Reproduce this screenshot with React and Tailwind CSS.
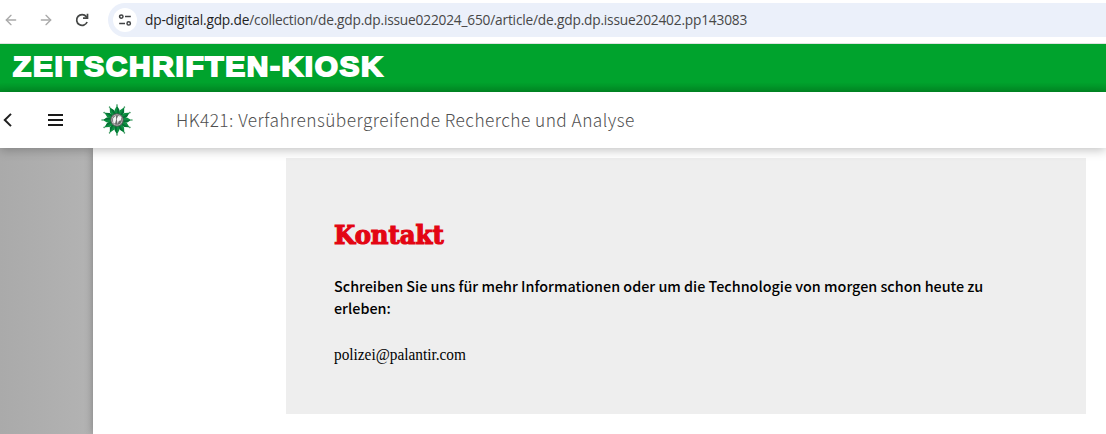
import { ArrowLeft, ArrowRight } from "lucide-react";

const rays = Array.from({ length: 12 }, (_, i) => i * 30);

function Star() {
  return (
    <svg className="size-8 shrink-0" viewBox="0 0 32 32">
      <circle cx="16" cy="16" r="9" fill="#077a35" />
      {rays.map((angle) => (
        <g key={angle} transform={`rotate(${angle} 16 16)`}>
          <path d="M16 .4 L16.6 2.6 L18.4 6 L17.8 11 H14.2 L13.6 6 L15.4 2.6Z" fill="#0c9040" />
          <path d="M16 2.4 L18.4 6 L17.8 11 H16.4Z" fill="#067036" />
          <circle cx="16" cy="1.1" r=".8" fill="#4a9a68" />
        </g>
      ))}
      <circle cx="16" cy="16" r="6.2" fill="#bdbdbd" stroke="#4a4a4a" strokeWidth=".9" />
      <circle cx="16" cy="16" r="4.8" fill="#6a6a6a" />
      <path d="M14.8 11.6 L12 14.4 L12.2 18.4 L14 19.8 L15.2 15.5Z M17 12 L20 12.6 L20 16.2 L17.8 17 L16.6 20 L15.8 15Z" fill="#f4f4f4" />
    </svg>
  );
}

function BrowserBar() {
  return (
    <div className="flex h-[44px] shrink-0 items-start border-b border-[#dfe3e1] bg-white">
      <div className="flex h-10 w-[108px] shrink-0 items-center pl-[3px]">
        <ArrowLeft className="size-4 text-[#a9a9a9]" strokeWidth={2} />
        <ArrowRight className="ml-[19px] size-4 text-[#a9a9a9]" strokeWidth={2} />
        <svg className="ml-[20px] size-4" viewBox="0 0 16 16" fill="none" stroke="#454746" strokeWidth="1.7">
          <path d="M13.1 10A5.4 5.4 0 1 1 12.3 4.6L13.4 5.8" />
          <path d="M13.5 1.8V6.2H9" />
        </svg>
      </div>
      <div className="mt-[3px] flex h-[34px] flex-1 items-center rounded-l-full bg-[#ebf0fa] pl-[5px]">
        <div className="flex size-6 shrink-0 items-center justify-center rounded-full bg-white">
          <svg className="size-[14px]" viewBox="0 0 14 14" fill="none" stroke="#404244" strokeWidth="1.5">
            <circle cx="3.3" cy="3.6" r="1.7" />
            <path d="M7 3.6H12.8M1.2 10.4H7" />
            <circle cx="10.7" cy="10.4" r="1.7" />
          </svg>
        </div>
        <div className="ml-[8px] origin-left scale-x-[0.98] whitespace-nowrap font-['Open_Sans',sans-serif] text-[14px] leading-5 tracking-[-0.2px] text-[#474747]">
          <span className="text-[#1f1f1f]">dp-digital.gdp.de</span>/collection/de.gdp.dp.issue022024_650/article/de.gdp.dp.issue202402.pp143083
        </div>
      </div>
    </div>
  );
}

export default function App() {
  return (
    <div className="flex h-[434px] w-[1106px] flex-col overflow-hidden bg-white">
      <BrowserBar />
      <div className="flex h-12 shrink-0 items-start bg-[linear-gradient(#00a32d_80%,#008d25)] pl-[13px]">
        <h1 className="mt-[4px] origin-left scale-x-[1.046] whitespace-nowrap font-['Liberation_Sans',sans-serif] text-[28.5px] font-bold leading-9 tracking-[1.6px] text-white [-webkit-text-stroke:1.9px_#fff]">
          ZEITSCHRIFTEN-KIOSK
        </h1>
      </div>
      <header className="z-10 flex h-14 shrink-0 items-center bg-white shadow-[0_2px_10px_rgba(0,0,0,0.25)]">
        <svg className="ml-[3px] h-[14px] w-[9px] shrink-0" viewBox="0 0 9 14" fill="none" stroke="#1f1f1f" strokeWidth="2">
          <path d="M8 .9L1.8 7L8 13.1" />
        </svg>
        <svg className="mb-px ml-[36px] h-3 w-[15px] shrink-0" viewBox="0 0 15 12" stroke="#1a1a1a" strokeWidth="2">
          <path d="M0 1H15M0 6H15M0 11H15" />
        </svg>
        <div className="ml-[38px] flex">
          <Star />
        </div>
        <div className="ml-[43px] whitespace-nowrap font-['Noto_Sans_CJK_SC',sans-serif] text-[17.3px] font-light leading-6 tracking-[0.46px] text-[#505050]">
          HK421: Verfahrensübergreifende Recherche und Analyse
        </div>
      </header>
      <div className="flex min-h-0 flex-1">
        <aside className="w-[93px] shrink-0 bg-[linear-gradient(90deg,#aaaaaa,#b3b3b3)]" />
        <main className="flex-1 bg-white pl-[193px] pt-[10px] shadow-[0_0_8px_rgba(0,0,0,0.3)]">
          <section className="h-64 w-[800px] bg-[#eeeeee] px-12 pt-[59px]">
            <h2 className="w-fit origin-left scale-x-[0.955] whitespace-nowrap font-['DejaVu_Serif',serif] text-[25.5px] font-bold leading-9 text-[#e30613] [-webkit-text-stroke:1.2px_#e30613]">
              Kontakt
            </h2>
            <p className="mt-[22px] whitespace-nowrap font-['Noto_Sans_CJK_SC',sans-serif] text-[14.35px] font-medium leading-[22px] text-black">
              Schreiben Sie uns für mehr Informationen oder um die Technologie von morgen schon heute zu
              <br />
              erleben:
            </p>
            <p className="mt-[24px] w-fit origin-left scale-x-[0.957] font-['Liberation_Serif',serif] text-[16px] leading-6 text-black">polizei@palantir.com</p>
          </section>
        </main>
      </div>
    </div>
  );
}
